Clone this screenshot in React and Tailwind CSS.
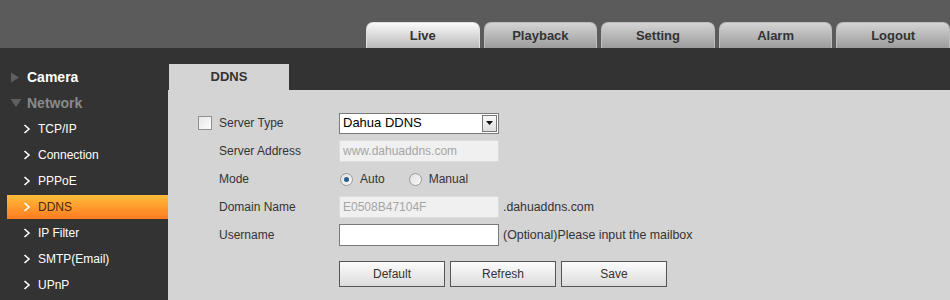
import React from "react";

const F = { fontFamily: '"Liberation Sans", Arial, sans-serif' };

function Chevron({ className = "" }) {
  return (
    <svg width="8" height="10" viewBox="0 0 8 10" className={className}>
      <path d="M1.5 1 L6 5 L1.5 9" fill="none" stroke="currentColor" strokeWidth="1.6" />
    </svg>
  );
}

function TopTab({ label, active }) {
  return (
    <div
      className={
        "w-[114px] h-[26px] rounded-t-[7px] flex items-center justify-center text-[13px] font-bold text-[#333] border border-b-0 " +
        (active
          ? "bg-gradient-to-b from-[#fafafa] to-[#b9b9b9] border-[#e0e0e0]"
          : "bg-gradient-to-b from-[#d4d4d4] to-[#9c9c9c] border-[#bdbdbd]")
      }
    >
      {label}
    </div>
  );
}

function SideItem({ label, active }) {
  return (
    <div className="h-[26px] py-[1px] pl-[7px]">
      <div
        className={
          "h-[24px] pl-[16px] flex items-center gap-[7px] text-[12px] " +
          (active
            ? "bg-gradient-to-b from-[#ffbb3a] to-[#ff7a20] text-[#4a2a10]"
            : "text-white")
        }
      >
        <Chevron className="text-white" />
        <span>{label}</span>
      </div>
    </div>
  );
}

function Row({ children, label, check }) {
  return (
    <div className="h-[28px] flex items-center">
      <div className="w-[21px] flex items-center">
        {check && (
          <div className="w-[14px] h-[14px] border border-[#8f8f8f] bg-gradient-to-br from-[#e8e8e8] to-[#fdfdfd]" />
        )}
      </div>
      <div className="w-[120px] text-[12px] text-[#333]">{label}</div>
      <div className="flex items-center">{children}</div>
    </div>
  );
}

function Radio({ checked, label }) {
  return (
    <div className="flex items-center mr-[24px]">
      <div className="w-[13px] h-[13px] rounded-full border border-[#9a9a9a] bg-gradient-to-br from-[#e0e0e0] to-[#fafafa] flex items-center justify-center">
        {checked && <div className="w-[5px] h-[5px] rounded-full bg-[#2a5d8c]" />}
      </div>
      <span className="ml-[7px] text-[12px] text-[#333]">{label}</span>
    </div>
  );
}

function Btn({ label }) {
  return (
    <div className="w-[106px] h-[26px] border border-[#555] bg-gradient-to-b from-[#fcfcfc] to-[#dcdcdc] flex items-center justify-center text-[12px] text-[#333]">
      {label}
    </div>
  );
}

export default function App() {
  return (
    <div style={F} className="w-[950px] h-[300px] bg-[#333333] overflow-hidden flex flex-col">
      <div className="h-[48px] bg-[#5b5b5b] flex items-end pl-[366px] gap-[4px]">
        <TopTab label="Live" active />
        <TopTab label="Playback" />
        <TopTab label="Setting" />
        <TopTab label="Alarm" />
        <TopTab label="Logout" />
      </div>
      <div className="flex-1 flex">
        <div className="w-[168px] pt-[16px]">
          <div className="h-[26px] flex items-center pl-[10px] gap-[7px] text-[14px] font-bold text-white">
            <svg width="10" height="11" viewBox="0 0 10 11">
              <path d="M1 0.5 L9 5.5 L1 10.5 Z" fill="#5e5e5e" />
            </svg>
            <span>Camera</span>
          </div>
          <div className="h-[26px] flex items-center pl-[10px] gap-[5px] text-[14px] font-bold text-[#8a8a8a]">
            <svg width="12" height="10" viewBox="0 0 12 10">
              <path d="M0.5 1 L11.5 1 L6 9 Z" fill="#5e5e5e" />
            </svg>
            <span>Network</span>
          </div>
          <SideItem label="TCP/IP" />
          <SideItem label="Connection" />
          <SideItem label="PPPoE" />
          <SideItem label="DDNS" active />
          <SideItem label="IP Filter" />
          <SideItem label="SMTP(Email)" />
          <SideItem label="UPnP" />
        </div>
        <div className="flex-1 flex flex-col">
          <div className="h-[42px] flex items-end pl-[1px]">
            <div className="w-[120px] h-[26px] bg-[#d4d4d4] flex items-center justify-center text-[13px] font-bold text-[#333]">
              DDNS
            </div>
          </div>
          <div className="flex-1 bg-[#d4d4d4] pl-[30px] pt-[19px]">
            <Row label="Server Type" check>
              <div className="w-[160px] h-[21px] bg-white border border-[#7a7a7a] flex items-center justify-between pl-[3px] pr-[1px]">
                <span className="text-[13px] text-black">Dahua DDNS</span>
                <div className="w-[15px] h-[17px] border border-[#777] bg-gradient-to-b from-[#fafafa] to-[#dedede] flex items-center justify-center">
                  <svg width="7" height="4" viewBox="0 0 7 4"><path d="M0 0 L7 0 L3.5 4 Z" fill="#111" /></svg>
                </div>
              </div>
            </Row>
            <Row label="Server Address">
              <div className="w-[160px] h-[22px] bg-[#f0f0f0] border border-[#dcdcdc] flex items-center pl-[3px] text-[12px] text-[#a5a5a5]">
                www.dahuaddns.com
              </div>
            </Row>
            <Row label="Mode">
              <div className="flex items-center pl-[1px]">
                <Radio checked label="Auto" />
                <Radio label="Manual" />
              </div>
            </Row>
            <Row label="Domain Name">
              <div className="w-[160px] h-[22px] bg-[#f0f0f0] border border-[#dcdcdc] flex items-center pl-[3px] text-[12px] text-[#a5a5a5]">
                E0508B47104F
              </div>
              <span className="ml-[4px] text-[12.3px] text-[#333]">.dahuaddns.com</span>
            </Row>
            <Row label="Username">
              <div className="w-[160px] h-[22px] bg-white border border-[#7a7a7a]" />
              <span className="ml-[4px] text-[12.4px] text-[#333]">(Optional)Please input the mailbox</span>
            </Row>
            <div className="flex gap-[5px] pl-[141px] mt-[12px]">
              <Btn label="Default" />
              <Btn label="Refresh" />
              <Btn label="Save" />
            </div>
          </div>
        </div>
      </div>
    </div>
  );
}
